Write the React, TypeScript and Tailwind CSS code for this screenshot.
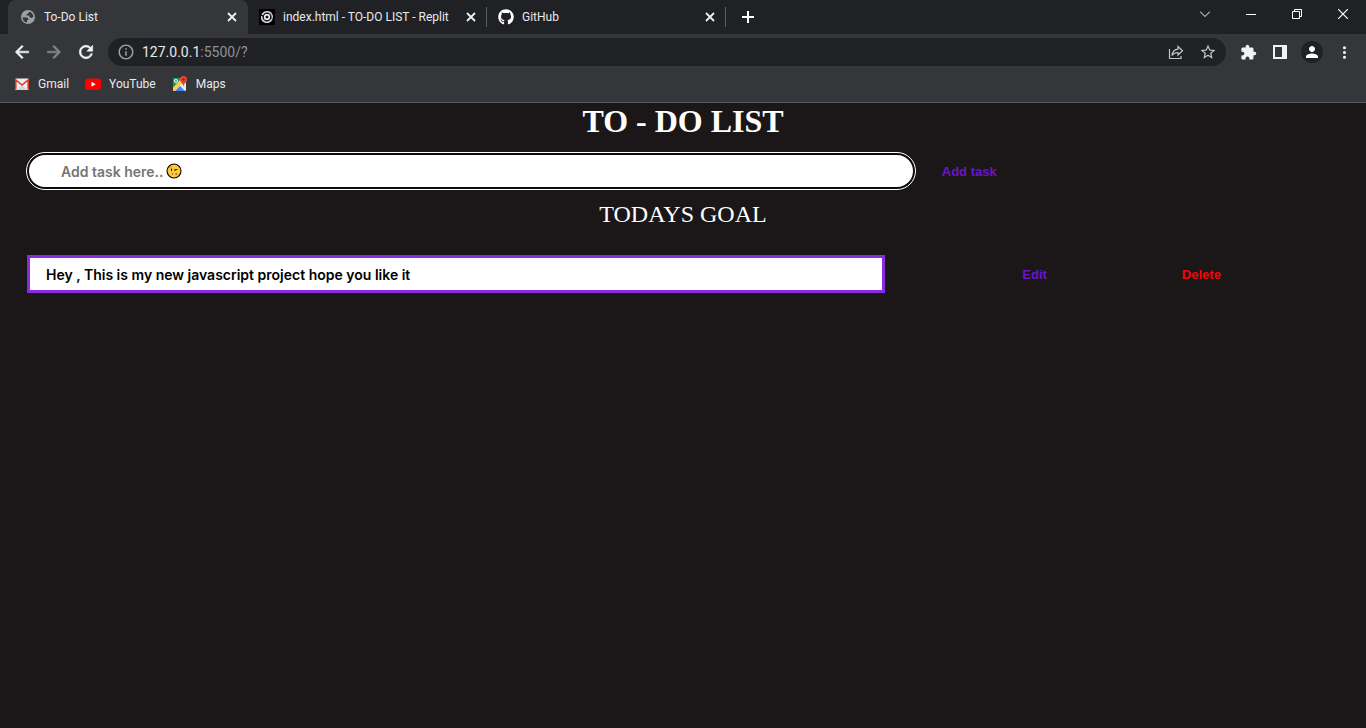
import { useState } from "react";
import type { ReactNode } from "react";
import { FaGithub } from "react-icons/fa";
import {
  MdExtension,
  MdInfoOutline,
  MdMoreVert,
  MdPerson,
  MdStarOutline,
} from "react-icons/md";

function CloseIcon() {
  return (
    <svg width="10" height="10" viewBox="0 0 10 10" stroke="#f1f1f1" strokeWidth="1.8" aria-hidden="true">
      <path d="M1 1l8 8M9 1l-8 8" />
    </svg>
  );
}

function NavIcon({ path, dimmed = false }: { path: string; dimmed?: boolean }) {
  return (
    <svg
      width="20"
      height="20"
      viewBox="0 0 24 24"
      strokeWidth=".7"
      fill="currentColor"
      stroke="currentColor"
      className={dimmed ? "text-[#85868a]" : "text-[#f1f3f4]"}
      aria-hidden="true"
    >
      <path d={path} />
    </svg>
  );
}

function GlobeIcon() {
  return (
    <svg width="16" height="16" viewBox="0 0 16 16" aria-hidden="true">
      <circle cx="8" cy="8" r="7" fill="#9aa0a6" />
      <path
        d="M2.600 8.200L6.500 8.500c1.500.2 2 1 2 2.300L7 11.300v2.200A5.500 5.500 0 0 1 2.600 8.200zM9.500 2.700c2.200.7 3.800 2.600 3.900 5l-1.700 1.400-2.200-.8L9.300 6.500H6.500V5.200L8 4.500z"
        fill="#35363a"
      />
    </svg>
  );
}

function ReplitIcon() {
  return (
    <svg width="16" height="16" viewBox="0 0 16 16" fill="none" aria-hidden="true">
      <rect width="16" height="16" fill="#000" />
      <circle cx="8" cy="8" r="4.200" fill="#6a6a6a" />
      <circle cx="8" cy="8" r="5.300" stroke="#d8d8d8" strokeWidth="1.600" strokeDasharray="15.200 1.450" transform="rotate(20 8 8)" />
      <circle cx="8" cy="8" r="3.600" stroke="#000" strokeWidth=".8" strokeDasharray="9 2.300" transform="rotate(-30 8 8)" />
      <circle cx="8" cy="8" r="2.300" stroke="#fff" strokeWidth="1.400" />
      <circle cx="8" cy="8" r="1.300" fill="#111" />
    </svg>
  );
}

function GmailIcon() {
  return (
    <svg width="16" height="16" viewBox="0 0 16 16" aria-hidden="true">
      <rect x="1" y="2.500" width="14" height="11.500" rx="1" fill="#eceff1" />
      <path d="M3 14l5-5 5 5z" fill="#d5d8da" />
      <path d="M1.800 13.500V4L8 9l6.200-5v9.500" fill="none" stroke="#e0392b" strokeWidth="1.600" />
    </svg>
  );
}

function YouTubeIcon() {
  return (
    <svg width="16" height="16" viewBox="0 0 16 16" aria-hidden="true">
      <rect y="2.500" width="16" height="11.500" rx="3" fill="#f00" />
      <path d="M6.500 5.800v5l4.200-2.500z" fill="#fff" />
    </svg>
  );
}

function MapsIcon() {
  return (
    <svg width="16" height="16" viewBox="0 0 16 16" aria-hidden="true">
      <rect x="1" y="2" width="13" height="13" rx="1" fill="#e8eaed" />
      <path d="M1 3a1 1 0 0 1 1-1h8L1 12z" fill="#1e9c5a" />
      <path d="M1 12l8-8 2 2.500L2.500 15H2a1 1 0 0 1-1-1z" fill="#fdd043" />
      <path d="M3 15l5-5 5 5z" fill="#4285f4" />
      <circle cx="4" cy="5" r="1.500" fill="none" stroke="#fff" />
      <path d="M11.500 0a3.500 3.500 0 0 0-3.500 3.500c0 2.500 2.800 3.500 3.500 7 .7-3.500 3.500-4.500 3.500-7A3.500 3.500 0 0 0 11.500 0z" fill="#ea4335" />
      <circle cx="11.500" cy="3.500" r="1.200" fill="#8c2319" />
    </svg>
  );
}

function SmirkFace() {
  return (
    <svg width="16" height="16" viewBox="0 0 16 16" fill="none" aria-hidden="true">
      <circle cx="8" cy="8" r="7" fill="#ffc83d" stroke="#000" strokeWidth="1.100" />
      <path d="M5.500 5.500v2.500M9.500 6.500h2M9 6v2M6 11h1M9.500 11h1.500" stroke="#4a3000" strokeWidth="1.100" />
      <path d="M3 5l3-1.500" stroke="#ef9526" />
    </svg>
  );
}

function Tab({ icon, title, active = false }: { icon: ReactNode; title: string; active?: boolean }) {
  return (
    <div
      className={
        active
          ? "flex w-60 items-center gap-2 rounded-t-lg bg-[#35363a] pl-3 pr-2"
          : "flex w-[239px] items-center gap-2 pl-[11px] pr-2"
      }
    >
      {icon}
      <span className="flex-1 truncate">{title}</span>
      <button aria-label={"Close " + title} className="grid size-4 place-items-center">
        <CloseIcon />
      </button>
    </div>
  );
}

function Divider() {
  return <span className="-ml-px h-5 w-px self-center bg-[#5a5c60]" />;
}

function BrowserChrome() {
  return (
    <header className="bg-[#35363a] font-['Roboto',sans-serif] text-xs text-[#e8eaed]">
      <div className="flex h-[34px] bg-[#202124] pl-2">
        <Tab active title="To-Do List" icon={<GlobeIcon />} />
        <Tab title="index.html - TO-DO LIST - Replit" icon={<ReplitIcon />} />
        <Divider />
        <Tab title="GitHub" icon={<FaGithub size={16} className="text-white" />} />
        <Divider />
        <button aria-label="New tab" className="grid w-11 place-items-center">
          <svg width="12" height="12" viewBox="0 0 12 12" stroke="#fff" strokeWidth="2" aria-hidden="true">
            <path d="M6 0v12M0 6h12" />
          </svg>
        </button>
        <div className="ml-auto flex h-7">
          <button aria-label="Search tabs" className="grid w-[46px] place-items-center">
            <svg width="10" height="10" viewBox="0 0 10 10" fill="none" stroke="#fff" aria-hidden="true">
              <path d="M0 2.500l5 5 5-5" />
            </svg>
          </button>
          <button aria-label="Minimize" className="grid w-[46px] place-items-center">
            <svg width="10" height="10" viewBox="0 0 10 10" stroke="#fff" aria-hidden="true">
              <path d="M0 5.500h10" />
            </svg>
          </button>
          <button aria-label="Restore" className="grid w-[46px] place-items-center">
            <svg width="10" height="10" viewBox="0 0 10 10" fill="none" stroke="#fff" aria-hidden="true">
              <path d="M.5 2.500h7v7h-7zM2.500 2.500v-2h7v7h-2" />
            </svg>
          </button>
          <button aria-label="Close window" className="grid w-[46px] place-items-center">
            <svg width="10" height="10" viewBox="0 0 10 10" stroke="#fff" strokeWidth="1.200" aria-hidden="true">
              <path d="M0 0l10 10M10 0L0 10" />
            </svg>
          </button>
        </div>
      </div>

      <div className="flex h-9 items-center px-3">
        <button aria-label="Back" className="w-8">
          <NavIcon path="M20 11H7.830l5.590-5.590L12 4l-8 8 8 8 1.410-1.410L7.830 13H20v-2z" />
        </button>
        <button aria-label="Forward" className="w-8">
          <NavIcon dimmed path="M12 4l-1.410 1.410L16.170 11H4v2h12.170l-5.580 5.590L12 20l8-8z" />
        </button>
        <button aria-label="Reload" className="w-8">
          <NavIcon path="M17.650 6.350A7.958 7.958 0 0 0 12 4c-4.420 0-7.990 3.580-7.990 8s3.570 8 7.990 8c3.730 0 6.840-2.550 7.730-6h-2.080A5.990 5.990 0 0 1 12 18c-3.310 0-6-2.690-6-6s2.690-6 6-6c1.660 0 3.140.69 4.220 1.780L13 11h7V4l-2.350 2.350z" />
        </button>
        <div className="flex h-7 flex-1 items-center rounded-full bg-[#202124] px-2">
          <MdInfoOutline size={18} className="mx-px text-[#9aa0a6]" />
          <span className="flex-1 pl-1.5 text-sm leading-5 text-[#e8eaed]">
            127.0.0.1<span className="text-[#8f9296]">:5500/?</span>
          </span>
          <button aria-label="Share this page" className="grid w-8 place-items-center">
            <svg width="16" height="16" viewBox="0 0 16 16" fill="none" stroke="#c3c5c8" strokeWidth="1.200" aria-hidden="true">
              <path d="M1.500 5v9.500h11.500V12" />
              <path d="M4 11.500c.5-4 2.500-6 6-6.300V2.500l4.500 4.300L10 11V8.500c-2.500 0-4.500.8-6 3z" />
            </svg>
          </button>
          <button aria-label="Bookmark this page" className="-mr-1.5 grid w-8 place-items-center">
            <MdStarOutline size={18} className="text-[#c3c5c8]" />
          </button>
        </div>
        <button aria-label="Extensions" className="ml-1.5 grid w-8 place-items-center">
          <MdExtension size={17} className="text-[#f1f3f4]" />
        </button>
        <button aria-label="Side panel" className="grid w-8 place-items-center">
          <svg width="14" height="14" viewBox="0 0 14 14" aria-hidden="true">
            <path d="M0 0h14v14H0zM2 2v10h7V2z" fill="#f1f3f4" fillRule="evenodd" />
          </svg>
        </button>
        <button aria-label="Profile" className="mx-[5px] grid size-[22px] place-items-center rounded-full bg-[#202124]">
          <MdPerson size={18} className="text-white" />
        </button>
        <button aria-label="Menu" className="-mr-1.5 grid w-8 place-items-center">
          <MdMoreVert size={19} className="text-[#f1f3f4]" />
        </button>
      </div>

      <nav aria-label="Bookmarks" className="flex h-[33px] items-center gap-4 border-b border-[#5c5d61] pb-1 pl-3.5">
        <a href="#gmail" className="flex items-center gap-2">
          <GmailIcon />
          Gmail
        </a>
        <a href="#youtube" className="flex items-center gap-2">
          <YouTubeIcon />
          YouTube
        </a>
        <a href="#maps" className="flex items-center gap-2">
          <MapsIcon />
          Maps
        </a>
      </nav>
    </header>
  );
}

export default function App() {
  const [task, setTask] = useState("");
  const [goal, setGoal] = useState("Hey , This is my new javascript project hope you like it");

  return (
    <div className="min-h-screen bg-[#1b1718]">
      <BrowserChrome />
      <main className="font-['Liberation_Sans',sans-serif] text-[13px] font-bold">
        <h1 className="text-center font-['Liberation_Serif',serif] text-[32px] leading-9 text-white">
          TO - DO LIST
        </h1>
        <form className="mt-3.5 flex items-center pl-[27px]" onSubmit={(event) => event.preventDefault()}>
          <div className="relative w-[66.300%]">
            <input
              aria-label="New task"
              placeholder="Add task here.."
              value={task}
              onChange={(event) => setTask(event.target.value)}
              className="block h-9 w-full rounded-full border-2 border-[#0d0b0d] bg-white px-8 font-['Inter',sans-serif] text-sm font-semibold text-black outline outline-white placeholder:text-[#757575]"
            />
            {task === "" && (
              <span className="pointer-events-none absolute inset-y-0 left-[139px] flex items-center">
                <SmirkFace />
              </span>
            )}
          </div>
          <button type="submit" className="ml-[27px] pt-px text-[#6a15cb]">
            Add task
          </button>
        </form>
        <h2 className="mt-[9px] text-center font-['Liberation_Serif',serif] text-2xl font-normal text-white">
          TODAYS GOAL
        </h2>
        <div className="mt-[25px] flex items-center pl-[27px]">
          <input
            aria-label="Goal"
            value={goal}
            onChange={(event) => setGoal(event.target.value)}
            className="h-[38px] w-[64.100%] border-3 border-[#8a2be2] bg-white px-4 font-['Inter',sans-serif] text-sm font-semibold text-black outline-none"
          />
          <button className="ml-[137px] pt-px text-[#6a15cb]">Edit</button>
          <button className="ml-[135px] pt-px text-[#f00]">Delete</button>
        </div>
      </main>
    </div>
  );
}
